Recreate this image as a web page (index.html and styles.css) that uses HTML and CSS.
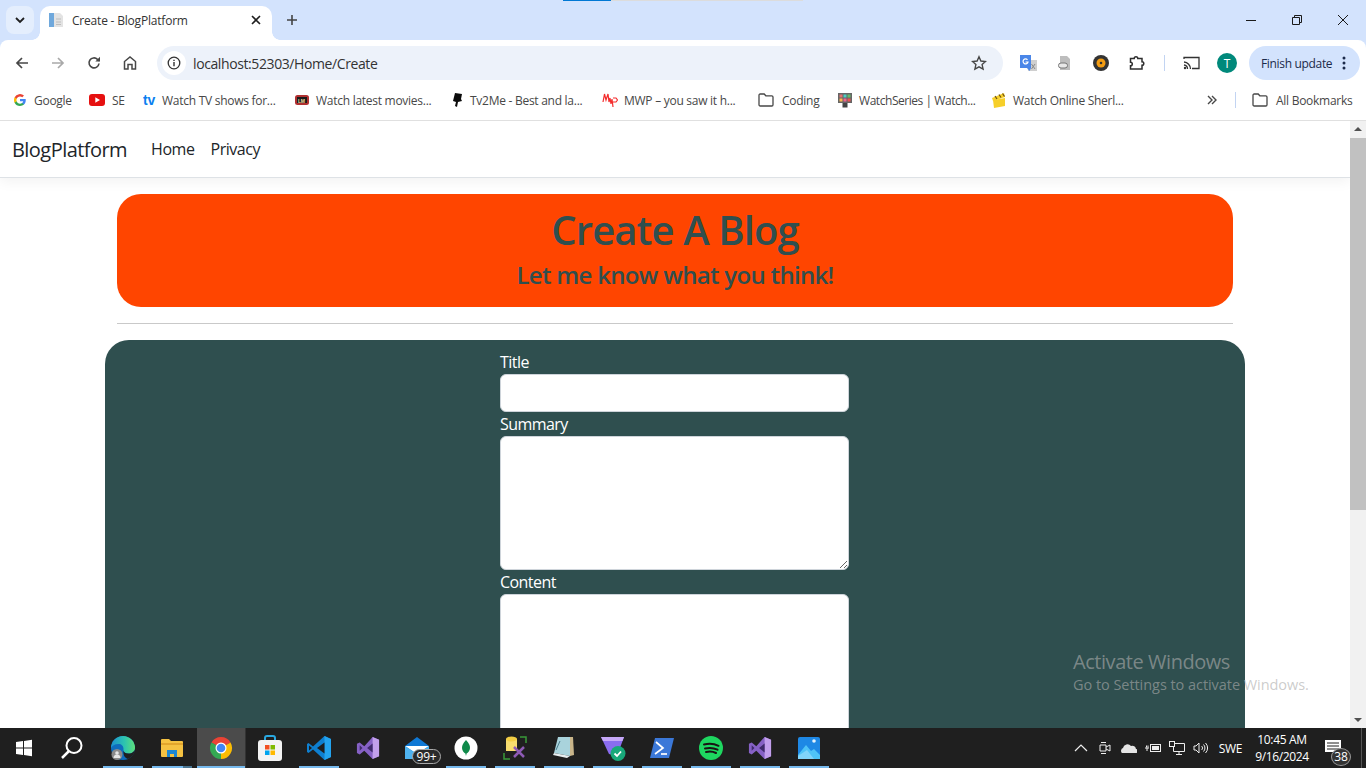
FILE: index.html
```html
<!DOCTYPE html>
<html lang="en">
<head>
<meta charset="utf-8">
<title>Create - BlogPlatform</title>
<link rel="stylesheet" href="styles.css">
</head>
<body>
<svg class="defs" aria-hidden="true">
  <defs><linearGradient id="edgeTop" x1="0" y1="0" x2="1" y2="0"><stop offset="0" stop-color="#1c8fd0"/><stop offset=".55" stop-color="#2cc3b0"/><stop offset="1" stop-color="#5fe07a"/></linearGradient></defs>
  <symbol id="folder" viewBox="0 0 16 14"><path d="M1 2.200C1 1.500 1.500 1 2.200 1h4l1.600 1.800h6C14.500 2.800 15 3.300 15 4v7.800c0 .7-.5 1.200-1.200 1.200H2.200C1.500 13 1 12.500 1 11.800z" fill="none" stroke="#474747" stroke-width="1.300"/></symbol>
  <symbol id="vs" viewBox="0 0 26 26"><path d="M18 1l7 3v18l-7 3-9-9-5 4-3-1.500V8.500L4 7l5 4z" fill="#8661c5"/><path d="M18 1l7 3v18l-7 3z" fill="#c29fec"/><path d="M4 10v6l3-3zM18 8l-6 5 6 5z" fill="#3f2a6b"/></symbol>
</svg>
<div class="screen">
  <div class="loadbar"><i class="load-a"></i><i class="load-b"></i></div>
  <header class="chrome">
    <div class="tabstrip">
      <button class="tabsearch"><svg width="12" height="8" viewBox="0 0 12 8"><path d="M2 2l4 4 4-4" fill="none" stroke="#1f1f1f" stroke-width="1.800"/></svg></button>
      <div class="tab">
        <svg class="favicon" width="16" height="16" viewBox="0 0 16 16"><rect x="1" y="1" width="5" height="14" fill="#6fa8dc"/><path d="M6 1h6l3 3v11H6z" fill="#e3e3e3"/><path d="M8 7h5M8 10h5M8 12.500h5" stroke="#bdbdbd"/></svg>
        <span class="tabtitle">Create - BlogPlatform</span>
        <svg class="tabclose" width="10" height="10" viewBox="0 0 10 10"><path d="M1 1l8 8M9 1l-8 8" stroke="#1f1f1f" stroke-width="1.600"/></svg>
      </div>
      <svg class="newtab" width="12" height="12" viewBox="0 0 12 12"><path d="M6 1v10M1 6h10" stroke="#444" stroke-width="1.600"/></svg>
      <div class="winctl">
        <svg width="12" height="12" viewBox="0 0 12 12"><path d="M1 6.500h10" stroke="#1a1a1a"/></svg>
        <svg width="12" height="12" viewBox="0 0 12 12"><path d="M1.500 3.500h7v7h-7zM3.500 3.500v-2h7v7h-2" fill="none" stroke="#1a1a1a"/></svg>
        <svg width="12" height="12" viewBox="0 0 12 12"><path d="M1 1l10 10M11 1L1 11" stroke="#1a1a1a"/></svg>
      </div>
    </div>
    <div class="toolbar">
      <svg class="tool" width="16" height="16" viewBox="0 0 16 16"><path d="M14 8H3M8 3L3 8l5 5" fill="none" stroke="#474747" stroke-width="1.700"/></svg>
      <svg class="tool" width="16" height="16" viewBox="0 0 16 16"><path d="M2 8h11M8 3l5 5-5 5" fill="none" stroke="#a9a9a9" stroke-width="1.700"/></svg>
      <svg class="tool" width="16" height="16" viewBox="0 0 16 16"><path d="M13 8.500A5 5 0 1 1 11.500 4.300L13.500 6" fill="none" stroke="#474747" stroke-width="1.600"/><path d="M14 1.800V6.500H9.300z" fill="#474747"/></svg>
      <svg class="tool" width="16" height="16" viewBox="0 0 16 16"><path d="M2.500 14V6.500L8 2l5.500 4.500V14H10V9.500H6V14z" fill="none" stroke="#474747" stroke-width="1.500"/></svg>
      <div class="omnibox">
        <span class="siteinfo"><svg width="14" height="14" viewBox="0 0 14 14"><circle cx="7" cy="7" r="5.800" fill="none" stroke="#333" stroke-width="1.300"/><path d="M7 6v4.200M7 3.700v1.300" stroke="#333" stroke-width="1.400"/></svg></span>
        <span class="url">localhost:52303/Home/Create</span>
        <svg class="star" width="16" height="16" viewBox="0 0 16 16"><path d="M8 1.800l1.900 4.200 4.600.5-3.400 3.100 1 4.500L8 11.800l-4.100 2.300 1-4.500L1.500 6.500l4.600-.5z" fill="none" stroke="#474747" stroke-width="1.400"/></svg>
      </div>
      <div class="exts">
        <svg width="17" height="17" viewBox="0 0 17 17"><path d="M7 5h10v11H8z" fill="#cfcfcf"/><path d="M0 0h11v13H0z" fill="#4a86e8"/><path d="M7.500 4.800A2.500 2.500 0 1 0 8 7H5.500" fill="none" stroke="#fff" stroke-width="1.200"/><path d="M7 13l2.500 3 1.500-3z" fill="#4a86e8"/><path d="M11.500 9l3.500 5M15 9l-3.500 5" stroke="#8a8a8a"/></svg>
        <svg width="16" height="16" viewBox="0 0 16 16"><path d="M3 1h7l3 3v11H3z" fill="#bdbdbd"/><rect x="1.500" y="8" width="9" height="5" rx="2.500" fill="#e8e8e8" stroke="#777"/></svg>
        <svg width="16" height="16" viewBox="0 0 16 16"><circle cx="8" cy="8" r="8" fill="#333"/><circle cx="8" cy="8" r="4.500" fill="#f39c12"/><circle cx="8" cy="8" r="1.300" fill="#333"/></svg>
        <svg width="16" height="16" viewBox="0 0 16 16"><path d="M1.500 3.500h3.700a1.800 1.800 0 0 1 3.600 0H13v3.200a1.800 1.800 0 0 1 0 3.600v3.700H1.500v-3.200a1.800 1.800 0 0 0 0-3.600z" fill="none" stroke="#2f2f2f" stroke-width="1.500"/></svg>
        <i class="vdivider"></i>
        <svg width="17" height="14" viewBox="0 0 17 14"><path d="M1 3V1.500h15v11H9" fill="none" stroke="#333" stroke-width="1.300"/><path d="M1 6a7 7 0 0 1 6.500 7M1 9a4 4 0 0 1 3.500 4" fill="none" stroke="#333" stroke-width="1.300"/><circle cx="2" cy="12" r="1.200" fill="#333"/></svg>
        <span class="avatar">T</span>
      </div>
      <div class="update"><span>Finish update</span><svg width="4" height="14" viewBox="0 0 4 14"><circle cx="2" cy="2" r="1.500" fill="#1b2a4a"/><circle cx="2" cy="7" r="1.500" fill="#1b2a4a"/><circle cx="2" cy="12" r="1.500" fill="#1b2a4a"/></svg></div>
    </div>
    <nav class="bookmarks">
      <a class="bm gap-8"><svg width="12" height="12" viewBox="0 0 24 24"><path d="M23.500 12.300c0-.8-.1-1.600-.2-2.300H12v4.500h6.500a5.500 5.500 0 0 1-2.400 3.600v3h3.900c2.200-2.100 3.500-5.100 3.500-8.800z" fill="#4285f4"/><path d="M12 24c3.200 0 6-1.100 8-2.900l-3.900-3c-1.100.7-2.500 1.200-4.100 1.200-3.100 0-5.800-2.100-6.700-5H1.300v3.100A12 12 0 0 0 12 24z" fill="#34a853"/><path d="M5.300 14.300a7.200 7.200 0 0 1 0-4.600V6.600h-4a12 12 0 0 0 0 10.800z" fill="#fbbc05"/><path d="M12 4.800c1.800 0 3.300.6 4.600 1.800l3.400-3.400A12 12 0 0 0 1.300 6.600l4 3.100c.9-2.800 3.600-4.900 6.700-4.900z" fill="#ea4335"/></svg><span>Google</span></a>
      <a class="bm"><svg width="16" height="12" viewBox="0 0 16 12"><rect width="16" height="12" rx="3" fill="#e61010"/><path d="M6.300 3.200v5.600L11 6z" fill="#fff"/></svg><span>SE</span></a>
      <a class="bm gap-3"><svg width="16" height="18" viewBox="0 0 16 18"><text x="0" y="14" class="logo-tv">tv</text></svg><span>Watch TV shows for...</span></a>
      <a class="bm"><svg width="14" height="12" viewBox="0 0 14 12"><rect y="1" width="14" height="10" rx="2.500" fill="#b03030"/><rect x="2" y="3" width="10" height="6" fill="#1a1a1a"/><text x="3" y="8.500" class="logo-lm">LM</text></svg><span>Watch latest movies...</span></a>
      <a class="bm"><svg width="12" height="14" viewBox="0 0 12 14"><path d="M4 0l7 1-1 5 1 2-4 1-1 5-2-1 1-4-3-1z" fill="#0c0c0c"/></svg><span>Tv2Me - Best and la...</span></a>
      <a class="bm gap-6"><svg width="16" height="16" viewBox="0 0 16 16"><path d="M1 10l1.500-8 1.500 6 2-6 1 8 1-4 1 6 1-5 1 8M11 6h3l1.500 2-1.500 2h-3" fill="none" stroke="#f42c2c" stroke-width="1.200"/></svg><span>MWP – you saw it h...</span></a>
      <a class="bm gap-8"><svg width="16" height="14"><use href="#folder"/></svg><span>Coding</span></a>
      <a class="bm gap-6 narrow"><svg width="16" height="16" viewBox="0 0 16 16"><rect x="1" y="1" width="14" height="10" fill="#666"/><rect x="2.500" y="2.500" width="3" height="3" fill="#e57373"/><rect x="6.500" y="2.500" width="3" height="3" fill="#4dd0c4"/><rect x="10.500" y="2.500" width="3" height="3" fill="#66bb6a"/><rect x="2.500" y="6.500" width="3" height="3" fill="#ffb74d"/><rect x="6.500" y="6.500" width="3" height="3" fill="#f06292"/><rect x="10.500" y="6.500" width="3" height="3" fill="#ef5350"/><rect x="5.500" y="11" width="5" height="4.500" fill="#444"/></svg><span>WatchSeries | Watch...</span></a>
      <a class="bm"><svg width="14" height="15" viewBox="0 0 14 15"><path d="M1 7l12-2v8L2 15z" fill="#f6cf2a"/><path d="M0 5l12-5 1 4L1 8z" fill="#f6cf2a"/><path d="M3 3l2 3M7 1.500l2 3M10.500 .5l2 3" stroke="#6b4e10" stroke-width="1.200"/></svg><span>Watch Online Sherl...</span></a>
      <svg class="chev" width="10" height="10" viewBox="0 0 10 10"><path d="M1 1l4 4-4 4M5 1l4 4-4 4" fill="none" stroke="#474747" stroke-width="1.400"/></svg>
      <i class="vdivider"></i>
      <a class="bm gap-8"><svg width="16" height="14"><use href="#folder"/></svg><span>All Bookmarks</span></a>
    </nav>
  </header>
  <div class="viewport">
    <main class="page">
      <div class="navbar">
        <span class="brand">BlogPlatform</span>
        <a class="navlink">Home</a>
        <a class="navlink">Privacy</a>
      </div>
      <div class="container">
        <section class="banner">
          <h1>Create A Blog</h1>
          <h3>Let me know what you think!</h3>
        </section>
        <hr class="rule">
      </div>
      <form class="panel">
        <div class="fields">
          <label for="t">Title</label>
          <input id="t" class="control" type="text">
          <label for="s">Summary</label>
          <textarea id="s" class="control area"></textarea>
          <label for="c">Content</label>
          <textarea id="c" class="control area tall"></textarea>
        </div>
      </form>
    </main>
    <aside class="scrollbar">
      <svg width="16" height="17" viewBox="0 0 16 17"><path d="M4 10l4-4 4 4z" fill="#505050"/></svg>
      <div class="track"><div class="thumb"></div></div>
      <svg width="16" height="17" viewBox="0 0 16 17"><path d="M4 7l4 4 4-4z" fill="#505050"/></svg>
    </aside>
    <div class="activate">
      <div class="act-1">Activate Windows</div>
      <div class="act-2">Go to Settings to activate Windows.</div>
    </div>
  </div>
  <footer class="taskbar">
    <div class="tb-start"><svg width="18" height="18" viewBox="0 0 18 18"><path d="M1 3l7-1v6.500H1zM9 2l8-1.200v7.700H9zM1 9.500h7V16l-7-1zM9 9.500h8v7.700L9 16z" fill="#fff"/></svg></div>
    <div class="tb-search"><svg width="24" height="24" viewBox="0 0 24 24"><circle cx="14" cy="9.500" r="7.500" fill="none" stroke="#fff" stroke-width="2"/><path d="M9 15l-7 7" stroke="#fff" stroke-width="2.500"/></svg></div>
    <div class="tb-app on"><svg width="26" height="26" viewBox="0 0 26 26"><circle cx="13" cy="13" r="12" fill="#0f6cbd"/><path d="M1 13a12 12 0 0 1 24 0c0 3.500-3 5.500-6.500 5.500-4 0-5.500-2-5-4.500 0-3-2-5-5-5-4 0-6.500 2-7.500 4z" fill="url(#edgeTop)"/><path d="M25 13c0 3.500-3 5.500-6.500 5.500-3 0-4.700-1-5-3-.5 4 1 7.500 4.500 8.500a12 12 0 0 0 7-11z" fill="#1f1f1f"/><circle cx="7" cy="19.500" r="5.500" fill="#8a8a8a"/><circle cx="7" cy="18" r="1.800" fill="#e6e6e6"/><path d="M3.500 23a3.500 3.500 0 0 1 7 0z" fill="#e6e6e6"/></svg></div>
    <div class="tb-app split"><svg width="24" height="20" viewBox="0 0 24 20"><path d="M1 2a1 1 0 0 1 1-1h7l2 2h11a1 1 0 0 1 1 1v14a1 1 0 0 1-1 1H2a1 1 0 0 1-1-1z" fill="#f5c242"/><path d="M1 5h22v2H1z" fill="#e2a52c"/><path d="M7 19v-7h10v7h-3v-3h-4v3z" fill="#1e88d2"/></svg></div>
    <div class="tb-app active"><svg width="24" height="24" viewBox="0 0 24 24"><path d="M12 12L2.470 6.500A11 11 0 0 1 21.530 6.500z" fill="#ea4335"/><path d="M12 12l9.530-5.500A11 11 0 0 1 12 23z" fill="#fbbc04"/><path d="M12 12v11A11 11 0 0 1 2.470 6.500z" fill="#34a853"/><circle cx="12" cy="12" r="5.500" fill="#fff"/><circle cx="12" cy="12" r="4.300" fill="#4285f4"/></svg></div>
    <div class="tb-app"><svg width="24" height="26" viewBox="0 0 24 26"><path d="M7 7V3a2 2 0 0 1 2-2h6a2 2 0 0 1 2 2v4" fill="none" stroke="#29a8e0" stroke-width="2"/><rect y="5" width="24" height="21" rx="3" fill="#f3f3f3"/><rect x="7" y="10" width="4.500" height="4.500" fill="#f25022"/><rect x="12.500" y="10" width="4.500" height="4.500" fill="#7fba00"/><rect x="7" y="15.500" width="4.500" height="4.500" fill="#00a4ef"/><rect x="12.500" y="15.500" width="4.500" height="4.500" fill="#ffb900"/></svg></div>
    <div class="tb-app on"><svg width="26" height="26" viewBox="0 0 26 26"><path d="M18.500 1L25 4v18l-6.500 3L7 14.500 2.500 18 1 17V9l1.500-1L7 11.500z" fill="#0e7fd0"/><path d="M18.500 1L25 4v18l-6.500 3z" fill="#23a3ee"/><path d="M18.500 7.500L11 13l7.500 5.500z" fill="#1e1e1e"/><path d="M3 10.500v5L6 13z" fill="#1e1e1e"/></svg></div>
    <div class="tb-app"><svg width="24" height="24"><use href="#vs"/></svg></div>
    <div class="tb-app"><svg width="24" height="22" viewBox="0 0 24 22"><path d="M0 9L12 0l12 9v13H0z" fill="#0f78d4"/><path d="M0 9h24l-12 8z" fill="#fff"/><path d="M0 9l12 8 12-8v13H0z" fill="#4fb3f0"/></svg><span class="badge">99+</span></div>
    <div class="tb-app on"><svg width="24" height="24" viewBox="0 0 24 24"><circle cx="12" cy="12" r="11.500" fill="#fff"/><path d="M12 4c3 3 4 5.500 4 8s-2 5-3.400 5.500L12 20l-.6-2.500C10 17 8 14.500 8 12s1-5 4-8z" fill="#0f8a4a"/></svg></div>
    <div class="tb-app on"><svg width="24" height="24" viewBox="0 0 24 24"><path d="M3 3h11v12H3z" fill="#f7dc6f"/><ellipse cx="8.500" cy="3" rx="5.500" ry="2.500" fill="#f3ce45"/><path d="M17 1h6v6M1 17v6h6" fill="none" stroke="#3a9a3a" stroke-width="1.500"/><path d="M11 11l10 10M21 11L11 21" stroke="#8e5bb5" stroke-width="2.500"/></svg></div>
    <div class="tb-app on"><svg width="24" height="24" viewBox="0 0 24 24"><path d="M6 1h15l-3 19-16-3z" fill="#a9d3dc"/><path d="M18 1h3l1 18-4 1z" fill="#c9b58a"/><path d="M2 17l16 3-3 2L1 19z" fill="#e8eef0"/><path d="M8 5l-4 9" stroke="#4a7d8c"/></svg></div>
    <div class="tb-app on"><svg width="26" height="26" viewBox="0 0 26 26"><path d="M1 2h23l-7 19L9 19z" fill="#8a6cf0"/><path d="M1 2h23l-1.500 4H3z" fill="#c6a8f8"/><circle cx="18" cy="18.500" r="7.500" fill="#18a87a"/><path d="M14.500 18.500l2.500 2.500 4-4.500" fill="none" stroke="#fff" stroke-width="1.800"/></svg></div>
    <div class="tb-app on"><svg width="24" height="20" viewBox="0 0 24 20"><path d="M5 0h19l-5 20H0z" fill="#3b78d8"/><path d="M6 4l7 6-8 6" fill="none" stroke="#fff" stroke-width="1.700"/><path d="M11 16h6" stroke="#fff" stroke-width="1.700"/></svg></div>
    <div class="tb-app on"><svg width="24" height="24" viewBox="0 0 24 24"><circle cx="12" cy="12" r="12" fill="#1ed760"/><path d="M5 8.500c5-1.300 10-1 14.500 1.300M6 12.500c4-1 8.500-.8 12.500 1.200M7 16c3.500-.8 7-.6 10 1" fill="none" stroke="#191414" stroke-width="2" stroke-linecap="round"/></svg></div>
    <div class="tb-app on"><svg width="24" height="24"><use href="#vs"/></svg></div>
    <div class="tb-app on"><svg width="22" height="22" viewBox="0 0 22 22"><rect width="22" height="22" rx="2" fill="#1e88e5"/><circle cx="16" cy="4" r="1.800" fill="#e3f2fd"/><path d="M0 18l8-10 5 6 3-2 6 6v4H0z" fill="#4fc3f7"/><path d="M0 22v-3l9-6 7 9z" fill="#81d4fa"/></svg></div>
    <div class="tray">
      <svg width="14" height="8" viewBox="0 0 14 8"><path d="M1 7l6-6 6 6" fill="none" stroke="#eee" stroke-width="1.200"/></svg>
      <svg width="12" height="16" viewBox="0 0 12 16"><path d="M1 5v6h6V5zM7 7l4-2v6l-4-2" fill="none" stroke="#eee"/><path d="M2 2.500h5M2 13.500h5" stroke="#eee"/></svg>
      <svg width="16" height="10" viewBox="0 0 16 10"><path d="M1 10a3 3 0 0 1 1-5 4.500 4.500 0 0 1 8-2 3.500 3.500 0 0 1 5 3 2 2 0 0 1 0 4z" fill="#e5e5e5"/></svg>
      <svg width="16" height="12" viewBox="0 0 16 12"><rect x="5.500" y="2.500" width="10" height="7" fill="none" stroke="#eee"/><rect x="7" y="4" width="7" height="4" fill="#eee"/><path d="M0 6h4M1.500 3.500v2M3 3.500v2M2 6v3" stroke="#eee"/></svg>
      <svg width="16" height="14" viewBox="0 0 16 14"><path d="M4.500 2.500h11v8h-11zM10 10.500v3M7 13.500h6" fill="none" stroke="#eee"/><rect x=".5" y=".5" width="5" height="5" fill="#202020" stroke="#eee"/></svg>
      <svg width="16" height="12" viewBox="0 0 16 12"><path d="M1 4v4h2l3 3V1L3 4z" fill="none" stroke="#eee"/><path d="M8.500 4a2.500 2.500 0 0 1 0 4M10.500 2.500a5 5 0 0 1 0 7M12.500 1a7 7 0 0 1 0 10" fill="none" stroke="#eee"/></svg>
      <span class="lang">SWE</span>
      <div class="clock"><span>10:45 AM</span><span>9/16/2024</span></div>
      <div class="notif"><svg width="16" height="13" viewBox="0 0 16 13"><path d="M0 0h16v12H0z" fill="#fff"/><path d="M2 3h12M2 6h12M2 9h12" stroke="#202020"/></svg><span class="count">38</span></div>
      <i class="showdesk"></i>
    </div>
  </footer>
</div>
</body>
</html>
```
FILE: styles.css
```css
* { box-sizing: border-box; }
html, body { margin: 0; height: 100%; overflow: hidden; }
body { font-family: "Open Sans", "Noto Sans", "Liberation Sans", sans-serif; color: #212529; }
.defs { position: absolute; width: 0; height: 0; }
svg { display: block; flex: none; }

.screen { position: relative; width: 1366px; height: 768px; display: flex; flex-direction: column; overflow: hidden; }

.loadbar { position: absolute; top: 0; left: 563px; display: flex; height: 1px; }
.load-a { width: 48px; background: #0078d4; }
.load-b { width: 192px; background: #dcdcdc; }

/* Browser chrome */
.chrome { background: #d3e3fd; flex: none; }
.tabstrip { height: 40px; display: flex; align-items: flex-end; padding-left: 6px; position: relative; }
.tabsearch { width: 28px; height: 28px; margin-bottom: 6px; border: 0; padding: 0; border-radius: 8px; background: #e4eefd; display: flex; align-items: center; justify-content: center; }
.tab { position: relative; width: 232px; height: 34px; margin-left: 6px; background: #fff; border-radius: 10px 10px 0 0; display: flex; align-items: center; padding: 0 11px 6px 8px; }
.tab::before, .tab::after { content: ""; position: absolute; bottom: 0; width: 8px; height: 8px; background: radial-gradient(circle at 0 0, transparent 7.500px, #fff 8px); }
.tab::before { left: -8px; }
.tab::after { right: -8px; background: radial-gradient(circle at 100% 0, transparent 7.500px, #fff 8px); }
.favicon { margin-right: 8px; }
.tabtitle { font-size: 12px; color: #333; flex: 1; letter-spacing: -.2px; }
.newtab { margin: 0 0 14px 14px; }
.winctl { margin-left: auto; width: 138px; display: flex; justify-content: space-between; padding: 0 17px; align-self: center; }

.toolbar { height: 44px; background: #fff; border-radius: 8px 8px 0 0; display: flex; align-items: center; padding: 2px 0 0 14px; }
.tool { margin-right: 20px; }
.omnibox { width: 846px; height: 34px; margin-left: -1px; background: #edf2fa; border-radius: 17px; display: flex; align-items: center; padding: 0 16px 0 5px; }
.siteinfo { width: 24px; height: 24px; border-radius: 50%; background: #fff; display: flex; align-items: center; justify-content: center; margin-right: 7px; }
.url { flex: 1; font-size: 14px; color: #333; letter-spacing: -.4px; }
.exts { display: grid; grid-template-columns: 37px 36px 36px 36px 18px 36px 36px; justify-items: center; align-items: center; width: 246px; padding: 0 4px 0 7px; }
.vdivider { display: block; width: 1px; height: 16px; background: #c2d4f2; flex: none; }
.avatar { width: 20px; height: 20px; border-radius: 50%; background: #00897b; color: #fff; font-size: 12px; display: flex; align-items: center; justify-content: center; }
.update { width: 111px; height: 34px; border-radius: 17px; background: #d3e3fd; display: flex; align-items: center; justify-content: space-between; padding: 0 14px 0 12px; font-size: 12px; color: #1b2a4a; letter-spacing: -.33px; }

.bookmarks { height: 37px; background: #fff; border-bottom: 1px solid #e0e0e0; display: grid; grid-template-columns: 75px 54px 152px 156px 151px 156px 79px 155px 215px 28px 17px auto; align-items: center; padding: 0 0 4px 14px; }
.bm { display: flex; align-items: center; gap: 7px; font-size: 12px; color: #474747; letter-spacing: -.27px; white-space: nowrap; }
.gap-8 { gap: 8px; }
.gap-6 { gap: 6px; }
.gap-3 { gap: 3px; }
.narrow { letter-spacing: -.45px; }
.chev { justify-self: start; }
.logo-tv { font: 700 14px "Liberation Sans", sans-serif; fill: #0b7ff0; }
.logo-lm { font: 700 5px "Liberation Sans", sans-serif; fill: #f2d9a0; }

/* Viewport */
.viewport { flex: 1; min-height: 0; display: flex; background: #fff; }
.page { flex: 1; min-width: 0; overflow: hidden; display: flex; flex-direction: column; align-items: center; }
.scrollbar { width: 16px; background: #f1f1f1; display: flex; flex-direction: column; }
.track { flex: 1; }
.thumb { height: 372px; background: #c1c1c1; }

.navbar { align-self: stretch; flex: none; height: 57px; background: #fff; border-bottom: 1px solid #dee2e6; box-shadow: 0 4px 12px rgba(0,0,0,.05); display: flex; align-items: center; padding: 0 12px; position: relative; letter-spacing: -.45px; }
.brand { font-size: 20px; margin-right: 24px; letter-spacing: -.55px; }
.navlink { font-size: 16px; margin-right: 16px; }

.container { width: 1116px; flex: none; margin-top: 16px; }
.banner { background: #ff4500; border-radius: 24px; height: 113px; padding-top: 12px; text-align: center; color: #2f4f4f; }
.banner h1 { margin: 0 0 6px; font-size: 40px; line-height: 48px; font-weight: 600; letter-spacing: -.9px; }
.banner h3 { margin: 0; font-size: 24px; line-height: 29px; font-weight: 600; letter-spacing: -.68px; }
.rule { margin: 16px 0; border: 0; border-top: 1px solid #c9c9c9; }

.panel { width: 1140px; flex: none; background: #2f4f4f; border-radius: 24px; padding: 10px 0 24px 395px; }
.fields { width: 349px; display: flex; flex-direction: column; color: #fff; }
.fields label { font-size: 16px; line-height: 24px; height: 24px; letter-spacing: -.55px; }
.control { display: block; width: 100%; height: 38px; border: 1px solid #ced4da; border-radius: 6px; background: #fff; padding: 6px 12px; }
.area { height: 134px; resize: vertical; flex: none; }
.tall { height: 300px; }

.activate { position: absolute; left: 1073px; top: 650px; pointer-events: none; color: rgba(172,172,172,.62); white-space: nowrap; }
.act-1 { font-size: 20px; line-height: 24px; letter-spacing: -.45px; }
.act-2 { font-size: 14.500px; line-height: 22px; letter-spacing: -.05px; }

/* Taskbar */
.taskbar { height: 40px; flex: none; background: #1f1f1f; display: flex; align-items: stretch; color: #fff; }
.tb-start { width: 48px; display: flex; align-items: center; justify-content: center; }
.tb-search { width: 51px; padding-right: 3px; display: flex; align-items: center; justify-content: center; }
.tb-app { position: relative; width: 49px; padding-right: 1px; display: flex; align-items: center; justify-content: center; }
.tb-app.on::after, .tb-app.split::after { content: ""; position: absolute; left: 4px; right: 5px; bottom: 0; height: 2px; background: #76b9ed; }
.tb-app.active { background: #4b4b4b; border-right: 1px solid #333; padding-right: 0; }
.tb-app.active::after { content: ""; position: absolute; left: 0; right: 0; bottom: 0; height: 2px; background: #76b9ed; }
.tb-app.split::after { background: linear-gradient(90deg, #76b9ed 78%, #4a7591 78%); }
.badge { position: absolute; left: 19px; top: 21px; width: 29px; height: 15px; border: 1px solid #aaa; border-radius: 8px; background: #2a2a2a; font-size: 12px; line-height: 13px; text-align: center; letter-spacing: -.2px; }
.tray { margin-left: auto; display: grid; grid-template-columns: repeat(6, 24px) 35px 68px 34px 12px; justify-items: center; align-items: center; padding-right: 4px; font-size: 12px; }
.lang { letter-spacing: -.3px; }
.clock { text-align: center; display: flex; flex-direction: column; line-height: 17px; letter-spacing: -.35px; }
.notif { position: relative; width: 34px; height: 40px; display: flex; align-items: center; justify-content: center; padding-bottom: 4px; }
.count { position: absolute; left: 15px; top: 20px; width: 20px; height: 18px; border: 1px solid #999; border-radius: 50%; background: #333; text-align: center; font-size: 12px; line-height: 16px; letter-spacing: -.2px; }
.showdesk { display: block; justify-self: end; width: 1px; height: 40px; background: #555; }
```
